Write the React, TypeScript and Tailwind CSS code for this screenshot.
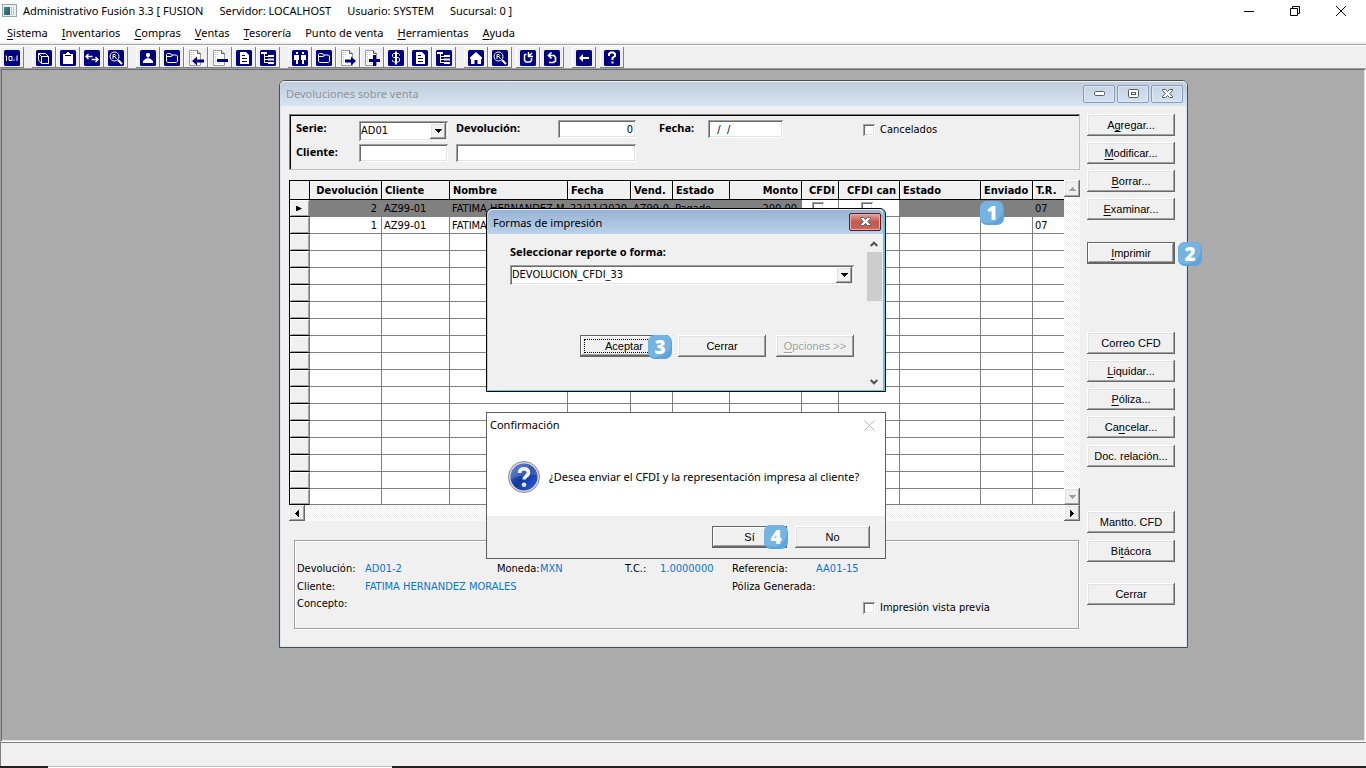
import type { ReactNode } from "react";

/* ---------- shared pieces ---------- */

const RAISED =
  "bg-[#f0f0f0] shadow-[inset_-1px_-1px_#696969,inset_1px_1px_#fff,inset_-2px_-2px_#a0a0a0,inset_2px_2px_#e3e3e3]";
const SUNKEN =
  "bg-white shadow-[inset_1px_1px_#a0a0a0,inset_-1px_-1px_#fff,inset_2px_2px_#696969,inset_-2px_-2px_#e3e3e3]";
const TAHOMA = "font-['DejaVu_Sans_Condensed','DejaVu_Sans',sans-serif]";
const SEGOE = "font-['Noto_Sans','Open_Sans',sans-serif]";
const MS_SANS = "font-['Liberation_Sans',Arial,sans-serif]";

/* "&" marks the access key, as in Windows resource strings. */
function Caption({ text }: { text: string }) {
  const at = text.indexOf("&");
  if (at < 0) return <>{text}</>;
  return (
    <>
      {text.slice(0, at)}
      <u className="underline-offset-2">{text[at + 1]}</u>
      {text.slice(at + 2)}
    </>
  );
}

function PushButton({ text, className = "", focus = false, strong = false, disabled = false }: {
  text: string; className?: string; focus?: boolean; strong?: boolean; disabled?: boolean;
}) {
  return (
    <button
      type="button"
      disabled={disabled}
      className={`relative flex h-[22px] shrink-0 items-center justify-center whitespace-nowrap text-[11px] leading-4 ${MS_SANS} ${
        strong
          ? "bg-[#f0f0f0] shadow-[inset_0_0_0_1px_#646464,inset_-2px_-2px_#696969,inset_2px_2px_#fff,inset_-3px_-3px_#a0a0a0]"
          : RAISED
      } ${disabled ? "text-[#a0a0a0] [text-shadow:1px_1px_#fff]" : "text-black"} ${className}`}
    >
      {focus && <span className="absolute inset-1 border border-dotted border-black" />}
      <span><Caption text={text} /></span>
    </button>
  );
}

function Combo({ id, label, value, className }: { id: string; label?: string; value: string; className: string }) {
  return (
    <span className={`flex h-5 p-[2px] ${SUNKEN} ${className}`}>
      <select
        id={id}
        aria-label={label}
        defaultValue={value}
        className={`min-w-0 flex-1 appearance-none bg-transparent text-[11px] leading-4 outline-none ${TAHOMA}`}
      >
        <option>{value}</option>
      </select>
      <span aria-hidden="true" className={`pointer-events-none flex w-4 items-center justify-center ${RAISED}`}>
        <svg width="7" height="4" viewBox="0 0 7 4" shapeRendering="crispEdges"><path d="M0 0h7v1H6v1H5v1H4v1H3V3H2V2H1V1H0z" /></svg>
      </span>
    </span>
  );
}

function Check({ label, className = "" }: { label: string; className?: string }) {
  return (
    <label className={`flex items-center gap-[5px] whitespace-nowrap text-[11px] leading-4 ${TAHOMA} ${className}`}>
      <input type="checkbox" className={`size-3 appearance-none ${SUNKEN}`} />
      {label}
    </label>
  );
}

function Badge({ n, className }: { n: number; className: string }) {
  return (
    <div className={`absolute z-30 size-6 overflow-hidden rounded-[7px] bg-[#5ba5dc] ${className}`}>
      <svg width="24" height="24" viewBox="0 0 24 24" className="absolute inset-0">
        <circle cx="8" cy="7" r="15" fill="#74b3e2" />
      </svg>
      <span className="relative flex size-full items-center justify-center font-['Open_Sans',sans-serif] text-[19px] leading-6 font-extrabold text-white">
        {n}
      </span>
    </div>
  );
}

function Arrow({ dir, dim = false }: { dir: "up" | "down" | "left" | "right"; dim?: boolean }) {
  const d = {
    up: "M3 0h1v1h1v1h1v1h1v1H0V3h1V2h1V1h1z",
    down: "M0 0h7v1H6v1H5v1H4v1H3V3H2V2H1V1H0z",
    left: "M4 0v7H3V6H2V5H1V4H0V3h1V2h1V1h1V0z",
    right: "M0 0h1v1h1v1h1v1h1v1H3v1H2v1H1v1H0z",
  }[dir];
  const flat = dir === "up" || dir === "down";
  return (
    <svg width={flat ? 7 : 4} height={flat ? 4 : 7} viewBox={flat ? "0 0 7 4" : "0 0 4 7"} shapeRendering="crispEdges">
      <path d={d} fill={dim ? "#a0a0a0" : "#000"} />
    </svg>
  );
}

/* ---------- toolbar icons ---------- */

const GLYPHS: Record<string, ReactNode> = {
  counter: <path d="M1.500 6h1v5M5 6.500h3v4H5zM10 9.500v1.500M13 5.500v5.500" />,
  cube: <path d="M5.500 6.500h7v7h-7zM5.500 6.500l-3-3h7l3 3M2.500 3.500v6.500l3 3.500" />,
  clip: <path d="M3 4h3V3h1V2h2v1h1v1h3v10H3zM5 5v1h6V5z" fill="#fff" stroke="none" fillRule="evenodd" />,
  swap: <path d="M2 6.500h6.500M4.500 4L2 6.500 4.500 9M7.500 9.500H14M11.500 7L14 9.500 11.500 12" strokeWidth="1.400" />,
  search: <><circle cx="6.500" cy="6.500" r="4.500" /><path d="M5 9V4.500h2q1.500 1 0 2H5M7 6.500L8.500 9" /><path d="M10 10l4 4" strokeWidth="2" /></>,
  person: <path d="M7 3h2l1 1v2L9 7H8.500v1.500H10l3 2.500v2H3v-2l3-2.500h1.500V7H7L6 6V4z" fill="#fff" stroke="none" />,
  folder: <path d="M2.500 11.500v-7l1-1h3l1 1.500h5l1 1v5.500l-1 1h-9zM2.500 6.500h5l1-1.500" />,
  sheet: <path d="M4 2h6l3 3v9H4zM6 5v1h3V5zM6 8v1h5V8zM6 11v1h5v-1z" fill="#fff" stroke="none" fillRule="evenodd" />,
  tree: <path d="M1 2h6v2H5v8h3v1H4V4H1zM8 5h6v2H8zM5 6h3v1H5zM8 8.500h6v2H8zM5 9h3v1H5zM8 12h6v2H8z" fill="#fff" stroke="none" />,
  people: <path d="M4 2h2v2H4zM2 5h5v5H6v4H5v-3v3H4v-4H2zM10 2h2v2h-2zM9 5h5v5h-2v4h-1v-3v3h-1v-4H9z" fill="#fff" stroke="none" />,
  dollar: <path d="M11.500 5.500V4.500l-1-1h-5l-1 1v2l1 1h5l1 1.500v2l-1 1h-5l-1-1v-1M7.500 1.500v13M8.500 1.500v13" />,
  home: <path d="M8 2l6 5.500V9h-1v5H9.500v-4h-3v4H3V9H2V7.500z" fill="#fff" stroke="none" />,
  redo: <path d="M6.500 4.500H5L4.500 5v5.500L6 12h4l1.500-1.500V8M8.500 2v4.500H13M8.500 6.500L12 3" strokeWidth="1.500" />,
  undo: <path d="M5 12.500h4.500l2-1.500V7.500l-1.500-2H5M7.500 2.500L4.500 5.500l3 3" strokeWidth="1.700" />,
  back: <path d="M3 8l4-4v3h6v2H7v3z" fill="#fff" stroke="none" />,
  help: <path d="M5 6V4l1.500-1.500h3L11 4v2L8.500 8v2M8.500 11.500v2" strokeWidth="2" />,
};

const PAGES: Record<string, string> = {
  pageBack: "M5 12l5-4.500v3h7v3h-7v3z",
  pageMinus: "M6 10h11v3H6z",
  pageNext: "M17 12l-5-4.500v3H6v3h6v3z",
  pagePlus: "M10 6h3v4h4v3h-4v4h-3v-4H6v-3h4z",
};

function ToolIcon({ name }: { name: string }) {
  if (PAGES[name]) {
    return (
      <svg width="18" height="18" viewBox="0 0 18 18">
        <path d="M2.500 1.500h8l3 3v12h-11z" fill="#fff" stroke="#999" />
        <path d="M10.500 1.500v3h3" fill="#ddd" stroke="#555" />
        <path d="M4.500 3v12M6.500 3v3M8.500 14v2" stroke="#c4c4c4" strokeDasharray="1 1" />
        <path d={PAGES[name]} fill="#000080" />
      </svg>
    );
  }
  return (
    <svg width="16" height="16" viewBox="0 0 16 16" fill="none" stroke="#fff">
      <rect width="16" height="16" rx="1.500" fill="#000080" stroke="none" />
      {GLYPHS[name]}
    </svg>
  );
}

const TOOL_GROUPS: { gap: string; items: [string, string][] }[] = [
  { gap: "", items: [["counter", "Contador"]] },
  { gap: "ml-2", items: [["cube", "Productos"], ["clip", "Inventario"], ["swap", "Traspasos"], ["search", "Buscar"]] },
  { gap: "ml-2", items: [["person", "Proveedores"], ["folder", "Documentos"], ["pageBack", "Recibir"], ["pageMinus", "Devolver"], ["sheet", "Reporte"], ["tree", "Detalle"]] },
  { gap: "ml-2", items: [["people", "Clientes"], ["folder", "Pedidos"], ["pageNext", "Enviar"], ["pagePlus", "Agregar"], ["dollar", "Cobrar"], ["sheet", "Reporte de ventas"], ["tree", "Detalle de ventas"]] },
  { gap: "ml-2", items: [["home", "Inicio"], ["search", "Consultar"]] },
  { gap: "ml-1", items: [["redo", "Rehacer"], ["undo", "Deshacer"]] },
  { gap: "ml-2", items: [["back", "Regresar"]] },
  { gap: "ml-1", items: [["help", "Ayuda"]] },
];

function Toolbar() {
  return (
    <div role="toolbar" className="flex h-6 border-t border-[#a0a0a0] bg-[#f0f0f0] pt-[2px] shadow-[inset_0_1px_#fff]">
      {TOOL_GROUPS.map((g, i) => (
        <div key={i} className={`flex ${g.gap}`}>
          {g.items.map(([icon, label]) => (
            <button
              key={label}
              type="button"
              aria-label={label}
              className="flex h-[21px] w-6 items-center justify-center bg-[#f0f0f0] shadow-[inset_-1px_-1px_#808080,inset_1px_1px_#fff]"
            >
              <ToolIcon name={icon} />
            </button>
          ))}
        </div>
      ))}
    </div>
  );
}

/* ---------- application chrome ---------- */

const MENU = ["&Sistema", "&Inventarios", "&Compras", "&Ventas", "&Tesorería", "Punto de venta", "&Herramientas", "&Ayuda"];

function AppHeader() {
  return (
    <header className={`bg-white text-black ${SEGOE}`}>
      <div className="flex h-[22px] items-center pr-[2px] pl-[2px]">
        <svg width="16" height="14" viewBox="0 0 16 14">
          <defs>
            <linearGradient id="app" x1="0" y1="0" x2="1" y2="1"><stop offset="0" stopColor="#3d8f77" /><stop offset="1" stopColor="#24507f" /></linearGradient>
          </defs>
          <rect x=".5" y=".5" width="14" height="12" fill="#e9eef0" stroke="#98a4ac" />
          <rect x="2" y="3" width="6" height="8" fill="url(#app)" />
          <path d="M9.500 3v8M11.500 3v8" stroke="#b9c7cf" />
        </svg>
        <h1 className="ml-[5px] flex flex-1 gap-4 text-[11px] leading-4 whitespace-nowrap">
          <span>Administrativo Fusión 3.3 [ FUSION</span>
          <span>Servidor: LOCALHOST</span>
          <span>Usuario: SYSTEM</span>
          <span>Sucursal: 0 ]</span>
        </h1>
        <div className="flex items-center">
          <button type="button" aria-label="Minimizar" className="flex h-5 w-[46px] items-center justify-center">
            <svg width="10" height="10" viewBox="0 0 10 10" stroke="#000"><path d="M0 5.500h10" /></svg>
          </button>
          <button type="button" aria-label="Restaurar" className="flex h-5 w-[46px] items-center justify-center">
            <svg width="10" height="10" viewBox="0 0 10 10" fill="none" stroke="#000"><path d="M.5 2.500h7v7h-7zM2.500 2.500v-2h7v7h-2" /></svg>
          </button>
          <button type="button" aria-label="Cerrar aplicación" className="flex h-5 w-[46px] items-center justify-center">
            <svg width="10" height="10" viewBox="0 0 10 10" stroke="#000"><path d="M0 0l10 10M10 0L0 10" /></svg>
          </button>
        </div>
      </div>
      <nav className="flex h-[22px] items-center gap-[14px] pl-[7px] shadow-[inset_0_-2px_#f0f0f0]">
        {MENU.map((m) => (
          <button key={m} type="button" className="text-[11px] leading-4"><Caption text={m} /></button>
        ))}
      </nav>
    </header>
  );
}

/* ---------- returns grid ---------- */

type Column = { title: string; width: string; right?: boolean };
const COLUMNS: Column[] = [
  { title: "Devolución", width: "w-[72px]", right: true },
  { title: "Cliente", width: "w-[68px]" },
  { title: "Nombre", width: "w-[118px]" },
  { title: "Fecha", width: "w-[63px]" },
  { title: "Vend.", width: "w-[42px]" },
  { title: "Estado", width: "w-[57px]" },
  { title: "Monto", width: "w-[72px]", right: true },
  { title: "CFDI", width: "w-[37px]", right: true },
  { title: "CFDI can", width: "w-[61px]", right: true },
  { title: "Estado", width: "w-[81px]" },
  { title: "Enviado", width: "w-[52px]" },
  { title: "T.R.", width: "w-[31px]" },
];
const ROWS: string[][] = [
  ["2", "AZ99-01", "FATIMA HERNANDEZ M", "22/11/2020", "AZ99-0", "Pagado", "200.00", "", "", "", "", "07"],
  ["1", "AZ99-01", "FATIMA", "", "", "", "", "", "", "", "", "07"],
];
const TRACK = "bg-[repeating-conic-gradient(#fff_0_25%,#f0f0f0_0_50%)] bg-[length:2px_2px]";

function Grid() {
  return (
    <div>
      <div className="flex">
        <table className={`w-full min-w-0 flex-1 table-fixed border-separate border-spacing-0 border-l border-black bg-white text-[11px] leading-[15px] ${TAHOMA}`}>
          <colgroup>
            <col className="w-5" />
            {COLUMNS.map((c, i) => <col key={i} className={c.width} />)}
          </colgroup>
          <thead>
            <tr className="h-5 bg-[#f0f0f0]">
              <th className="border-y border-r border-black p-0" />
              {COLUMNS.map((c, i) => (
                <th
                  key={i}
                  className={`border-y border-r border-black py-0 whitespace-nowrap shadow-[inset_1px_1px_#fff] last:border-r-0 ${c.right ? "pr-[3px] pl-0 text-right" : "pr-0 pl-[3px] text-left"}`}
                >
                  {c.title}
                </th>
              ))}
            </tr>
          </thead>
          <tbody>
            {Array.from({ length: 18 }, (_, r) => (
              <tr key={r} className={`h-[17px] last:h-4 ${r === 0 ? "bg-[#808080]" : ""}`}>
                <th className="border-r border-b border-r-[#808080] border-b-black bg-[#f0f0f0] p-0 shadow-[inset_1px_1px_#fff,inset_-1px_-1px_#a0a0a0]">
                  {r === 0 && <span className="flex justify-center"><svg width="7" height="5" viewBox="0 0 7 5"><path d="M0 0h1l5 2.500-5 2.500H0z" /></svg></span>}
                </th>
                {COLUMNS.map((c, i) => {
                  const boxed = r === 0 && (i === 7 || i === 8);
                  return (
                    <td
                      key={i}
                      className={`border-r border-b border-[#808080] py-0 whitespace-nowrap last:border-r-0 ${boxed ? "bg-white bg-clip-padding" : ""} ${c.right ? "pr-1 pl-0 text-right" : "pr-0 pl-[2px]"}`}
                    >
                      {boxed ? (
                        <input type="checkbox" aria-label={c.title} className={`mx-auto block size-3 appearance-none ${SUNKEN}`} />
                      ) : ROWS[r]?.[i]}
                    </td>
                  );
                })}
              </tr>
            ))}
          </tbody>
        </table>
        <div className={`flex w-4 shrink-0 flex-col justify-between ${TRACK}`}>
          <button type="button" aria-label="Subir" className={`flex h-[17px] items-center justify-center ${RAISED}`}><Arrow dir="up" dim /></button>
          <button type="button" aria-label="Bajar" className={`flex h-[17px] items-center justify-center ${RAISED}`}><Arrow dir="down" dim /></button>
        </div>
      </div>
      <div className={`flex h-4 justify-between ${TRACK}`}>
        <button type="button" aria-label="Izquierda" className={`flex w-4 items-center justify-center ${RAISED}`}><Arrow dir="left" /></button>
        <button type="button" aria-label="Derecha" className={`flex w-4 items-center justify-center ${RAISED}`}><Arrow dir="right" /></button>
      </div>
    </div>
  );
}

/* ---------- returns window ---------- */

const FIELD = `h-[18px] px-[3px] text-[11px] leading-4 outline-none ${TAHOMA} ${SUNKEN}`;
const LABEL = `text-[11px] leading-4 font-bold ${SEGOE}`;

function FilterPanel() {
  return (
    <form className="grid h-[56px] grid-cols-[63px_97px_102px_101px_49px_155px_1fr] grid-rows-[24px_24px] border border-[#c0c0c0] border-t-[#808080] border-l-[#808080] pt-[5px] pl-[6px] shadow-[inset_1px_1px_#000]">
      <label htmlFor="serie" className={LABEL}>Serie:</label>
      <Combo id="serie" value="AD01" className="mt-px w-[89px]" />
      <label htmlFor="devolucion" className={LABEL}>Devolución:</label>
      <input id="devolucion" defaultValue="0" className={`w-[78px] text-right ${FIELD}`} />
      <label htmlFor="fecha" className={LABEL}>Fecha:</label>
      <input id="fecha" defaultValue="  /  /" className={`w-[75px] ${FIELD}`} />
      <Check label="Cancelados" className="mt-[2px] h-4" />
      <label htmlFor="cliente" className={LABEL}>Cliente:</label>
      <input id="cliente" className={`w-[89px] ${FIELD}`} />
      <input aria-label="Nombre del cliente" className={`col-span-2 w-[180px] ${FIELD}`} />
    </form>
  );
}

function Detail() {
  const value = "text-[#0a75d6]";
  return (
    <section className={`mt-[19px] mr-px ml-[5px] grid h-[89px] grid-cols-[68px_132px_43px_85px_35px_72px_84px_1fr] grid-rows-[18px_17px_20px] border border-[#a0a0a0] pt-5 pl-[2px] text-[11px] leading-4 whitespace-nowrap shadow-[inset_1px_1px_#fff,1px_1px_#fff] ${TAHOMA}`}>
      <span>Devolución:</span>
      <span className={value}>AD01-2</span>
      <span>Moneda:</span>
      <span className={value}>MXN</span>
      <span>T.C.:</span>
      <span className={value}>1.0000000</span>
      <span>Referencia:</span>
      <span className={value}>AA01-15</span>
      <span>Cliente:</span>
      <span className={`col-span-5 ${value}`}>FATIMA HERNANDEZ MORALES</span>
      <span className="col-span-2">Póliza Generada:</span>
      <span className="col-span-6">Concepto:</span>
      <Check label="Impresión vista previa" className="col-span-2 ml-[131px] pt-1" />
    </section>
  );
}

function MdiButton({ label, children }: { label: string; children: ReactNode }) {
  return (
    <button
      type="button"
      aria-label={label}
      className="flex h-[18px] w-8 items-center justify-center rounded-[2px] border border-[#8a9cb8] bg-linear-to-b from-[#c5d3e4] to-[#d5e2f0] shadow-[inset_0_0_0_1px_#dce8f4]"
    >
      {children}
    </button>
  );
}

function CloseGlyph({ stroke }: { stroke: string }) {
  return (
    <svg width="11" height="9" viewBox="0 0 11 9">
      <path d="M.5.500h3l2 2 2-2h3v1L7.800 4.500l2.700 3v1h-3l-2-2-2 2h-3v-1l2.700-3L.5 1.500z" fill="#fff" stroke={stroke} />
    </svg>
  );
}

const ACTIONS: { text: string; gap: string; strong?: boolean }[] = [
  { text: "A&gregar...", gap: "" },
  { text: "&Modificar...", gap: "mt-[6px]" },
  { text: "&Borrar...", gap: "mt-[6px]" },
  { text: "&Examinar...", gap: "mt-[6px]" },
  { text: "&Imprimir", gap: "mt-[22px]", strong: true },
  { text: "Correo CFD", gap: "mt-[68px]" },
  { text: "&Liquidar...", gap: "mt-[6px]" },
  { text: "&Póliza...", gap: "mt-[6px]" },
  { text: "Ca&ncelar...", gap: "mt-[6px]" },
  { text: "Doc. relación...", gap: "mt-[7px]" },
  { text: "Mantto. CFD", gap: "mt-11" },
  { text: "Bi&tácora", gap: "mt-[7px]" },
  { text: "Cerrar", gap: "mt-[21px]" },
];

function ReturnsWindow() {
  return (
    <section className="absolute top-3 left-[279px] w-[909px] rounded-t-[6px] border border-[#4a4d52] bg-[#f0f0f0] pb-[18px] shadow-[inset_0_0_0_1px_#dce6f2]">
      <div className="flex h-[25px] items-center gap-[2px] rounded-t-[5px] bg-linear-to-b from-[#bfcddb] to-[#d7e4f2] pr-1 pl-[6px] shadow-[inset_0_1px_#eef3f8]">
        <h2 className={`flex-1 pt-px text-[11px] leading-4 text-[#8f959c] ${SEGOE}`}>Devoluciones sobre venta</h2>
        <MdiButton label="Minimizar ventana">
          <svg width="11" height="5" viewBox="0 0 11 5"><rect x=".5" y=".5" width="10" height="4" rx="1" fill="#fff" stroke="#555b66" /></svg>
        </MdiButton>
        <MdiButton label="Maximizar ventana">
          <svg width="11" height="9" viewBox="0 0 11 9" fill="#fff" stroke="#555b66"><rect x=".5" y=".5" width="10" height="8" rx="1" /><rect x="3.500" y="3.500" width="4" height="2" /></svg>
        </MdiButton>
        <MdiButton label="Cerrar ventana"><CloseGlyph stroke="#555b66" /></MdiButton>
      </div>
      <div className="flex gap-[7px] pt-2 pr-3 pl-[9px]">
        <div className="min-w-0 flex-1">
          <FilterPanel />
          <div className="mt-[10px]"><Grid /></div>
          <Detail />
        </div>
        <div className="flex w-[88px] flex-col">
          {ACTIONS.map((a) => <PushButton key={a.text} text={a.text} strong={a.strong} className={a.gap} />)}
        </div>
      </div>
    </section>
  );
}

/* ---------- dialogs ---------- */

function PrintFormsDialog() {
  return (
    <section
      role="dialog"
      aria-label="Formas de impresión"
      className="absolute top-[140px] left-[486px] z-10 flex h-[184px] w-[400px] flex-col rounded-t-[6px] border border-black bg-[#f0f0f0] shadow-[inset_1px_0_#b9d1ea,inset_-2px_-1px_#5cc8e8]"
    >
      <div className="mr-[2px] ml-px flex h-[25px] items-center rounded-t-[5px] bg-linear-to-b from-[#97b2d1] to-[#b9d1ea] pr-[2px] pl-[5px] shadow-[inset_0_1px_#e4edf6]">
        <h2 className={`flex-1 pt-[2px] text-[11px] leading-4 ${SEGOE}`}>Formas de impresión</h2>
        <button type="button" aria-label="Cerrar formas" className="flex h-[18px] w-8 items-center justify-center rounded-[2px] border border-[#5a1a1e] bg-linear-to-b from-[#e2a49a] via-[#c4554a] via-50% to-[#c76a5a] shadow-[inset_0_0_0_1px_#e9aca2]">
          <CloseGlyph stroke="#5b5f70" />
        </button>
      </div>
      <div className="mr-[3px] flex flex-1 pb-[2px]">
        <div className="flex-1 pt-[10px] pr-[13px] pl-[23px]">
          <label htmlFor="forma" className={`block ${LABEL}`}>Seleccionar reporte o forma:</label>
          <Combo id="forma" value="DEVOLUCION_CFDI_33" className="mt-[5px] w-full" />
          <div className="mt-[50px] flex justify-end gap-[10px]">
            <PushButton text="Aceptar" focus strong className="w-[88px]" />
            <PushButton text="Cerrar" className="w-[88px]" />
            <PushButton text="&Opciones >>" disabled className="w-[78px]" />
          </div>
        </div>
        <div className="flex w-[15px] flex-col items-center pt-[7px] pb-1">
          <svg width="9" height="6" viewBox="0 0 9 6" fill="none" stroke="#505050" strokeWidth="2"><path d="M.7 5L4 1.700 7.300 5" /></svg>
          <div className="mt-[5px] h-[49px] w-full bg-[#cdcdcd]" />
          <svg className="mt-auto" width="9" height="6" viewBox="0 0 9 6" fill="none" stroke="#505050" strokeWidth="2"><path d="M.7 1L4 4.300 7.300 1" /></svg>
        </div>
      </div>
    </section>
  );
}

function ConfirmDialog() {
  return (
    <section role="dialog" aria-label="Confirmación" className={`absolute top-[344px] left-[486px] z-10 flex h-[147px] w-[400px] flex-col border border-[#5f5f5f] bg-white ${SEGOE}`}>
      <div className="flex h-6 items-center justify-between pr-[10px] pl-[3px]">
        <h2 className="text-[11px] leading-4">Confirmación</h2>
        <button type="button" aria-label="Cerrar confirmación">
          <svg width="11" height="11" viewBox="0 0 11 11" stroke="#bdbdbd"><path d="M.5.500l10 10M10.500.500l-10 10" /></svg>
        </button>
      </div>
      <div className="flex flex-1 items-center gap-[9px] pl-[21px]">
        <svg width="32" height="32" viewBox="0 0 32 32">
          <defs>
            <linearGradient id="ask" x1="0" y1="0" x2="1" y2="1"><stop offset="0" stopColor="#4a78d8" /><stop offset=".5" stopColor="#12379f" /><stop offset="1" stopColor="#2f62e0" /></linearGradient>
          </defs>
          <circle cx="16" cy="16" r="15.500" fill="#d9dbe0" stroke="#8a8a8a" />
          <circle cx="16" cy="16" r="13.500" fill="url(#ask)" />
          <path d="M3 18a13 13 0 0 1 26-4q-12-2-26 4z" fill="#fff" opacity=".16" />
          <path d="M11.500 12q.2-4.200 4.500-4.200t4.500 3.800q0 2.300-2.400 3.600-1.900 1.100-1.900 3.300" fill="none" stroke="#f2f2f2" strokeWidth="3.600" />
          <circle cx="16" cy="23.700" r="2.300" fill="#e8e8e8" />
        </svg>
        <p className="text-[11px] leading-4 whitespace-nowrap">¿Desea enviar el CFDI y la representación impresa al cliente?</p>
      </div>
      <div className="flex h-[42px] shrink-0 items-center justify-end gap-2 bg-[#f0f0f0] pr-[15px]">
        <PushButton text="Sí" strong className="w-[75px]" />
        <PushButton text="No" className="w-[75px]" />
      </div>
    </section>
  );
}

export default function App() {
  return (
    <div className="flex h-screen flex-col overflow-hidden bg-[#f0f0f0] text-black">
      <AppHeader />
      <Toolbar />
      <main className="relative flex-1 bg-[#ababab] shadow-[inset_1px_1px_#a0a0a0,inset_-1px_-1px_#fff,inset_2px_2px_#696969,inset_-2px_-2px_#e3e3e3]">
        <ReturnsWindow />
        <PrintFormsDialog />
        <ConfirmDialog />
        <Badge n={1} className="top-[133px] left-[980px]" />
        <Badge n={2} className="top-[174px] left-[1178px]" />
        <Badge n={3} className="top-[267px] left-[648px]" />
        <Badge n={4} className="top-[457px] left-[764px]" />
      </main>
      <footer className="h-6 shrink-0 border-t border-l border-[#808080] bg-[#f0f0f0]" />
      <div className="flex h-[2px] shrink-0 bg-[#231f20]">
        <div className="ml-12 w-[344px] border-t border-[#c0c0c0] bg-white" />
      </div>
    </div>
  );
}
